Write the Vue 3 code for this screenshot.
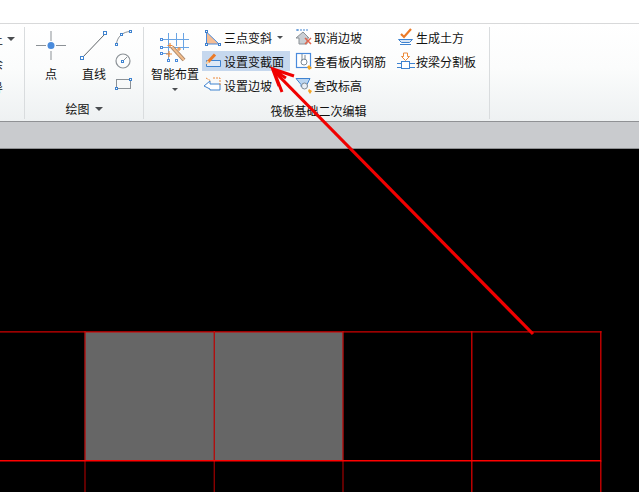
<template>
  <div class="page">
    <div class="top-bar"></div>

    <div class="ribbon">
      <!-- cut off group at the left edge -->
      <section class="group group-cut">
        <div class="cut-rows">
          <div class="cut-row"><span class="cut-text">土</span><i class="caret"></i></div>
          <div class="cut-row"><span class="cut-text">余</span></div>
          <div class="cut-row"><span class="cut-text">导</span></div>
        </div>
      </section>

      <section class="group group-draw">
        <div class="group-body draw-body">
          <button class="big-btn point-btn">
            <svg width="32" height="32" viewBox="0 0 32 32">
              <path d="M16 1v10M16 21v9M1 15.500h10M21 15.500h10" stroke="#8b9196" stroke-width="1" fill="none" />
              <circle cx="16" cy="15.500" r="3.500" fill="#4a8bdc" />
            </svg>
            <span>点</span>
          </button>
          <button class="big-btn line-btn">
            <svg width="32" height="32" viewBox="0 0 32 32">
              <path d="M4 28L27 4" stroke="#5f6468" stroke-width="1" />
              <rect x="2.500" y="26.500" width="3" height="3" fill="#fff" stroke="#3f83d0" />
              <rect x="25.500" y="1.500" width="3" height="3" fill="#fff" stroke="#3f83d0" />
            </svg>
            <span>直线</span>
          </button>
          <div class="mini-tools">
            <svg width="18" height="18" viewBox="0 0 18 18">
              <path d="M2.500 15C3 8 9 2.500 16.500 2.500" stroke="#8b9196" fill="none" />
              <rect x="1.500" y="14.500" width="2" height="2" fill="#fff" stroke="#3f83d0" />
              <rect x="15.500" y="1.500" width="2" height="2" fill="#fff" stroke="#3f83d0" />
              <rect x="6.500" y="4.500" width="2" height="2" fill="#fff" stroke="#3f83d0" />
            </svg>
            <svg width="18" height="18" viewBox="0 0 18 18">
              <circle cx="9" cy="9" r="7" fill="none" stroke="#8b9196" stroke-width="1.200" />
              <path d="M9 9L13 5" stroke="#8b9196" />
              <rect x="7.500" y="8.500" width="2" height="2" fill="#fff" stroke="#3f83d0" />
            </svg>
            <svg width="18" height="18" viewBox="0 0 18 18">
              <rect x="2.500" y="4.500" width="14" height="9" fill="none" stroke="#8b9196" />
              <rect x="1.500" y="12.500" width="2" height="2" fill="#fff" stroke="#3f83d0" />
              <rect x="15.500" y="3.500" width="2" height="2" fill="#fff" stroke="#3f83d0" />
            </svg>
          </div>
        </div>
        <div class="group-label label-draw">绘图<i class="caret caret-label"></i></div>
      </section>

      <section class="group group-raft">
        <div class="group-body raft-body">
          <button class="big-btn smart-btn">
            <svg width="32" height="32" viewBox="0 0 32 32">
              <path d="M3 9.500h27M3 17.500h27M3 23.500h8M9.500 3v27M17.500 3v13M24.500 3v17" stroke="#69a4e4" stroke-width="1" fill="none" />
              <rect x="1.500" y="8.500" width="2" height="2" fill="#fff" stroke="#4a8bdc" />
              <rect x="1.500" y="16.500" width="2" height="2" fill="#fff" stroke="#4a8bdc" />
              <rect x="1.500" y="22.500" width="2" height="2" fill="#fff" stroke="#4a8bdc" />
              <rect x="8.500" y="29.500" width="2" height="2" fill="#fff" stroke="#4a8bdc" />
              <rect x="16.500" y="29.500" width="2" height="2" fill="#fff" stroke="#4a8bdc" />
              <path d="M13 17L25 30" stroke="#a7866a" stroke-width="4" />
              <path d="M13 17L25 30" stroke="#f3bd8c" stroke-width="2" />
              <path d="M10 21v6M7 24h6M20 17v4M18 19h4M11 13v5M8.500 15.500h5" stroke="#ec8a3a" stroke-width="1.200" />
            </svg>
            <span>智能布置</span>
            <i class="caret caret-big"></i>
          </button>

          <div class="tool-col col-a">
            <div class="tool-row">
              <svg class="tool-icon" width="18" height="18" viewBox="0 0 18 18">
                <path d="M3.500 4v12H16z" fill="#f6bd93" stroke="#4a8bdc" />
                <rect x="2.500" y="2.500" width="2" height="2" fill="#fff" stroke="#3f7fcb" />
                <rect x="2.500" y="15.500" width="2" height="2" fill="#fff" stroke="#3f7fcb" />
                <rect x="15.500" y="15.500" width="2" height="2" fill="#fff" stroke="#3f7fcb" />
              </svg>
              <span>三点变斜</span><i class="caret caret-row"></i>
            </div>
            <div class="tool-row active">
              <svg class="tool-icon" width="18" height="18" viewBox="0 0 18 18">
                <path d="M3.500 8.500h14v6h-14z" fill="#dfe9f6" stroke="#3f83d0" />
                <path d="M5 10L12 2.500" stroke="#ec7a26" stroke-width="3" />
                <path d="M3.500 12L5 9" stroke="#f7d3a8" stroke-width="2" />
              </svg>
              <span>设置变截面</span>
            </div>
            <div class="tool-row">
              <svg class="tool-icon" width="18" height="18" viewBox="0 0 18 18">
                <path d="M1 10l6-5v3h10v6H7v-1z" fill="#fff" stroke="#3f83d0" />
                <path d="M3 2l5 3M10 2h7v7" stroke="#ec8a3a" stroke-dasharray="2 1" fill="none" />
              </svg>
              <span>设置边坡</span>
            </div>
          </div>

          <div class="tool-col col-b">
            <div class="tool-row">
              <svg class="tool-icon" width="18" height="18" viewBox="0 0 18 18">
                <path d="M1 10l7-6 6 6H12v6H4v-6z" fill="#c9ced3" stroke="#8b9196" />
                <path d="M2 1v3M2 2h12" stroke="#3f83d0" stroke-dasharray="2 1" />
                <path d="M10 10l6 6M16 10l-6 6" stroke="#e2644b" stroke-width="1.500" />
              </svg>
              <span>取消边坡</span>
            </div>
            <div class="tool-row">
              <svg class="tool-icon" width="18" height="18" viewBox="0 0 18 18">
                <rect x="1.500" y="1.500" width="14" height="14" fill="#fff" stroke="#4a8bdc" stroke-width="1.200" />
                <circle cx="9" cy="10" r="3" fill="none" stroke="#7d8a96" />
                <path d="M7 2v7M10 3v5" stroke="#7d8a96" />
                <path d="M14 13l3 3-3 2-2-3z" fill="#f5a623" />
              </svg>
              <span>查看板内钢筋</span>
            </div>
            <div class="tool-row">
              <svg class="tool-icon" width="18" height="18" viewBox="0 0 18 18">
                <path d="M1 2.500h14l-3 6v2H6v-2z" fill="#b9d4f0" stroke="#3f83d0" />
                <circle cx="9.500" cy="10" r="3" fill="#e8eef5" stroke="#7d8a96" />
                <path d="M14 13l3 2-2 3-2-3z" fill="#f5a623" />
              </svg>
              <span>查改标高</span>
            </div>
          </div>

          <div class="tool-col col-c">
            <div class="tool-row">
              <svg class="tool-icon" width="18" height="18" viewBox="0 0 18 18">
                <path d="M4 6l3 3 7-8" stroke="#ec7a26" stroke-width="2.200" fill="none" />
                <path d="M1.500 11.500h14l-3 3h-8z" fill="#d9e6f5" stroke="#3f83d0" />
                <path d="M3 16.500h11" stroke="#3f83d0" />
              </svg>
              <span>生成土方</span>
            </div>
            <div class="tool-row">
              <svg class="tool-icon" width="18" height="18" viewBox="0 0 18 18">
                <path d="M6.500 1h4v3.500h2L8.500 8.500l-4-4h2z" fill="#fff" stroke="#ec8a3a" />
                <rect x="4.500" y="9.500" width="8" height="7" fill="#fff" stroke="#3f83d0" />
                <path d="M0 11.500h4M13 11.500h5M0 15.500h4M13 15.500h5" stroke="#3f83d0" />
              </svg>
              <span>按梁分割板</span>
            </div>
          </div>
        </div>
        <div class="group-label label-raft">筏板基础二次编辑</div>
      </section>
    </div>

    <div class="tab-strip"></div>

    <div class="canvas">
      <svg class="drawing" width="639" height="343" viewBox="0 149 639 343">
        <rect x="85" y="332" width="258" height="128" fill="#666" />
        <path d="M85 331V460M214.300 331V460M343 331V460" stroke="#b01010" stroke-width="1.400" />
        <path d="M471.800 331V460M600.800 331V460" stroke="#d80000" stroke-width="1.300" />
        <path d="M85 461V492M214.300 461V492M343 461V492" stroke="#880000" stroke-width="1.400" />
        <path d="M471.800 461V492M600.800 461V492" stroke="#d80000" stroke-width="1.300" />
        <path d="M0 331.800H601.500" stroke="#d00000" stroke-width="1.300" />
        <path d="M0 460.800H601.500" stroke="#ff0000" stroke-width="1.500" />
      </svg>
    </div>

    <!-- hand drawn annotation over the ribbon and the canvas -->
    <svg class="arrow" width="639" height="492" viewBox="0 0 639 492">
      <path d="M533 334L273 70" stroke="#f00000" stroke-width="3.200" fill="none" />
      <path d="M294 76L273 69L282 92M286 78L273 70L279 86" stroke="#f00000" stroke-width="3" fill="none" />
    </svg>
  </div>
</template>

<script setup>
</script>

<style>
html,
body {
  margin: 0;
  overflow: hidden;
}
</style>

<style scoped>
.page {
  position: relative;
  width: 639px;
  height: 492px;
  display: flex;
  flex-direction: column;
  overflow: hidden;
  background: #000;
  font-family: "Noto Sans CJK SC", "Noto Sans", sans-serif;
  font-size: 12px;
  color: #111;
}

.top-bar {
  height: 23px;
  flex-shrink: 0;
  background: #fff;
  border-bottom: 1px solid #d8d9da;
}

.ribbon {
  height: 97px;
  flex-shrink: 0;
  display: flex;
  background: linear-gradient(#fff 0%, #fbfcfc 45%, #eef1f2 100%);
  border-bottom: 1px solid #8f9194;
}

.group {
  display: flex;
  flex-direction: column;
  flex-shrink: 0;
  margin: 3px 0 2px;
  border-right: 1px solid #d9dcde;
  box-sizing: border-box;
}

.group-body {
  flex: 1;
  display: flex;
}

.group-label {
  height: 22px;
  display: flex;
  align-items: center;
  justify-content: center;
  line-height: 16px;
}

.label-draw {
  padding-top: 2px;
  box-sizing: border-box;
}

.label-raft {
  padding: 5px 0 0 4px;
  box-sizing: border-box;
}

.group-cut {
  width: 25px;
  overflow: hidden;
}

.cut-rows {
  display: flex;
  flex-direction: column;
}

.cut-row {
  height: 24px;
  display: flex;
  align-items: center;
}

.cut-text {
  margin-left: -9px;
  width: 12px;
  flex-shrink: 0;
}

.group-draw {
  width: 119px;
}

.draw-body {
  padding-left: 10px;
}

.group-raft {
  width: 346px;
}

.raft-body {
  padding-left: 7px;
}

.big-btn {
  display: flex;
  flex-direction: column;
  align-items: center;
  padding: 3px 0 0;
  border: 0;
  background: none;
  font: inherit;
  color: inherit;
}

.big-btn span {
  margin-top: 4px;
  line-height: 16px;
  white-space: nowrap;
}

.point-btn {
  width: 32px;
}

.line-btn {
  width: 32px;
  margin-left: 11px;
}

.smart-btn {
  width: 48px;
}

.mini-tools {
  margin-left: 4px;
  padding-top: 2px;
  display: flex;
  flex-direction: column;
  gap: 5px;
}

.tool-col {
  display: flex;
  flex-direction: column;
  gap: 4px;
}

.col-a {
  margin-left: 3px;
  width: 92px;
}

.col-b {
  width: 102px;
}

.tool-row {
  height: 20px;
  display: flex;
  align-items: center;
  white-space: nowrap;
}

.tool-row.active {
  width: 88px;
  background: #c6d8ee;
}

.tool-icon {
  margin: 0 3px 0 1px;
  flex-shrink: 0;
}

.col-b .tool-icon,
.col-c .tool-icon {
  margin-right: 1px;
}

.caret {
  display: inline-block;
  width: 0;
  height: 0;
  border-style: solid;
  border-width: 4px 4px 0;
  border-color: #4a4d50 transparent transparent;
}

.cut-row .caret {
  margin-left: 4px;
}

.caret-label {
  margin-left: 5px;
}

.caret-big {
  margin-top: 6px;
  border-width: 3px 3px 0;
}

.caret-row {
  margin-left: 5px;
  border-width: 3px 3px 0;
}

.tab-strip {
  height: 26px;
  flex-shrink: 0;
  background: #c9cbce;
  border-bottom: 1px solid #8e9092;
}

.canvas {
  flex: 1;
  position: relative;
  background: #000;
}

.drawing {
  display: block;
}

.arrow {
  position: absolute;
  left: 0;
  top: 0;
  pointer-events: none;
}
</style>
